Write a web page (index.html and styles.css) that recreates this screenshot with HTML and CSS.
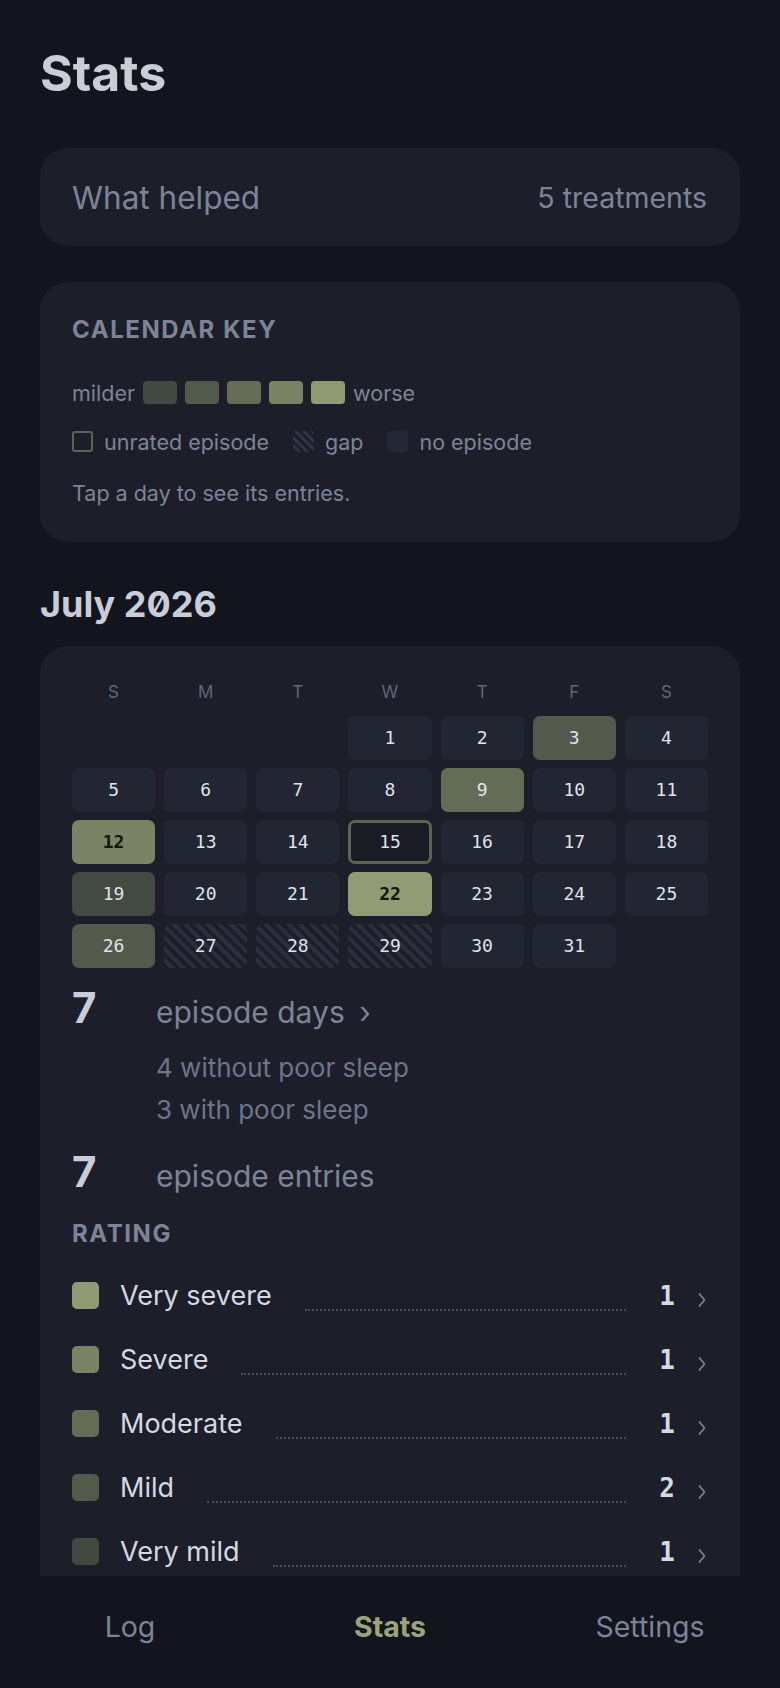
FILE: index.html
```html
<!DOCTYPE html>
<html lang="en">
<head>
    <meta charset="UTF-8">
    <meta name="viewport" content="width=device-width, initial-scale=1.0">
    <title>Stats</title>
    <link rel="stylesheet" href="styles.css">
</head>
<body>
    <div class="app">
        <main class="screen">
            <h1 class="page-title">Stats</h1>

            <a class="card link-card" href="#">
                <span class="link-name">What helped</span>
                <span class="link-value">5 treatments</span>
            </a>

            <section class="card key-card">
                <h2 class="label">Calendar key</h2>
                <div class="key-row">
                    <span>milder</span>
                    <span class="sw l1"></span>
                    <span class="sw l2"></span>
                    <span class="sw l3"></span>
                    <span class="sw l4"></span>
                    <span class="sw l5"></span>
                    <span>worse</span>
                </div>
                <div class="key-row key-types">
                    <span class="key-item"><span class="mark unrated"></span>unrated episode</span>
                    <span class="key-item"><span class="mark hatch"></span>gap</span>
                    <span class="key-item"><span class="mark empty"></span>no episode</span>
                </div>
                <p class="hint">Tap a day to see its entries.</p>
            </section>

            <h2 class="month">July 2026</h2>

            <section class="card cal-card">
                <div class="weekdays">
                    <span>S</span><span>M</span><span>T</span><span>W</span><span>T</span><span>F</span><span>S</span>
                </div>
                <div class="days">
                    <span class="blank"></span><span class="blank"></span><span class="blank"></span>
                    <span class="day">1</span>
                    <span class="day">2</span>
                    <span class="day l2">3</span>
                    <span class="day">4</span>
                    <span class="day">5</span>
                    <span class="day">6</span>
                    <span class="day">7</span>
                    <span class="day">8</span>
                    <span class="day l3">9</span>
                    <span class="day">10</span>
                    <span class="day">11</span>
                    <span class="day l4 strong">12</span>
                    <span class="day">13</span>
                    <span class="day">14</span>
                    <span class="day unrated-day">15</span>
                    <span class="day">16</span>
                    <span class="day">17</span>
                    <span class="day">18</span>
                    <span class="day l1">19</span>
                    <span class="day">20</span>
                    <span class="day">21</span>
                    <span class="day l5 strong">22</span>
                    <span class="day">23</span>
                    <span class="day">24</span>
                    <span class="day">25</span>
                    <span class="day l2">26</span>
                    <span class="day gap-day">27</span>
                    <span class="day gap-day">28</span>
                    <span class="day gap-day">29</span>
                    <span class="day">30</span>
                    <span class="day">31</span>
                </div>

                <div class="stat first">
                    <span class="stat-num">7</span>
                    <span class="stat-label">episode days <span class="more">&rsaquo;</span></span>
                    <div class="stat-sub">
                        <div>4 without poor sleep</div>
                        <div>3 with poor sleep</div>
                    </div>
                </div>
                <div class="stat second">
                    <span class="stat-num">7</span>
                    <span class="stat-label">episode entries</span>
                </div>

                <h2 class="label rating-title">Rating</h2>
                <ul class="ratings">
                    <li><span class="rsw l5"></span><span class="rname">Very severe</span><span class="leader"></span><span class="rcount">1</span><svg class="chev" viewBox="0 0 10 16"><path d="M2.5 2 L7.5 8 L2.5 14"/></svg></li>
                    <li><span class="rsw l4"></span><span class="rname">Severe</span><span class="leader"></span><span class="rcount">1</span><svg class="chev" viewBox="0 0 10 16"><path d="M2.5 2 L7.5 8 L2.5 14"/></svg></li>
                    <li><span class="rsw l3"></span><span class="rname">Moderate</span><span class="leader"></span><span class="rcount">1</span><svg class="chev" viewBox="0 0 10 16"><path d="M2.5 2 L7.5 8 L2.5 14"/></svg></li>
                    <li><span class="rsw l2"></span><span class="rname">Mild</span><span class="leader"></span><span class="rcount">2</span><svg class="chev" viewBox="0 0 10 16"><path d="M2.5 2 L7.5 8 L2.5 14"/></svg></li>
                    <li><span class="rsw l1"></span><span class="rname">Very mild</span><span class="leader"></span><span class="rcount">1</span><svg class="chev" viewBox="0 0 10 16"><path d="M2.5 2 L7.5 8 L2.5 14"/></svg></li>
                </ul>
            </section>
        </main>

        <nav class="tabbar">
            <a href="#">Log</a>
            <a href="#" class="active">Stats</a>
            <a href="#">Settings</a>
        </nav>
    </div>
</body>
</html>
```

FILE: styles.css
```css
*{margin:0;padding:0;box-sizing:border-box;}
body{background:#12151d;color:#c9cdd8;font-family:Inter,"Noto Sans",sans-serif;}
a{text-decoration:none;color:inherit;}
ul{list-style:none;}

.app{height:100vh;display:flex;flex-direction:column;}
.screen{flex:1;overflow:hidden;padding:43px 40px 0;}

.page-title{font-size:50px;line-height:1.2;font-weight:700;color:#c9cdd8;margin-bottom:45px;}

.card{background:#1c1f2a;border-radius:28px;}

/* what helped */
.link-card{height:98px;display:flex;align-items:center;justify-content:space-between;padding:0 33px 0 32px;color:#7c8497;}
.link-name{font-size:31.5px;}
.link-value{font-size:28.5px;}

/* calendar key */
.key-card{margin-top:36px;padding:34px 32px 37px;}
.label{font-size:24px;line-height:1.2;font-weight:700;text-transform:uppercase;letter-spacing:0.065em;color:#7c8497;}
.key-row{display:flex;align-items:center;gap:8px;height:24px;font-size:21.5px;color:#7c8497;margin-top:36px;}
.key-types{margin-top:25px;gap:0;}
.key-item{display:flex;align-items:center;margin-right:24px;}
.sw{width:34px;height:23px;border-radius:4px;}
.mark{width:21px;height:21px;border-radius:3px;margin-right:11px;}
.mark.unrated{border:2px solid #5c6450;}
.mark.hatch{background:repeating-linear-gradient(45deg,#1c1f2a 0 3px,#313644 3px 6px);}
.mark.empty{background:#232733;}
.hint{font-size:21.5px;line-height:24px;color:#7c8497;margin-top:27px;}

.l1{background:#424940;}
.l2{background:#525a4a;}
.l3{background:#646c55;}
.l4{background:#7a8464;}
.l5{background:#919b73;}

/* month */
.month{font-size:36px;line-height:1.2;font-weight:700;color:#c9cdd8;margin-top:41px;margin-bottom:20px;font-feature-settings:"zero" 1;}

.cal-card{padding:34px 32px 40px;border-bottom-left-radius:0;border-bottom-right-radius:0;}
.weekdays{display:grid;grid-template-columns:repeat(7,1fr);column-gap:9px;text-align:center;font-size:17px;line-height:24px;color:#5f677a;margin-bottom:12px;}
.days{display:grid;grid-template-columns:repeat(7,1fr);gap:8px 9px;}
.day{height:44px;border-radius:7px;background:#222632;display:flex;align-items:center;justify-content:center;font-family:"DejaVu Sans Mono","Liberation Mono",monospace;font-size:18px;color:#dfe3ec;}
.day.l1{background:#434a42;}
.day.l2{background:#535a4c;}
.day.l3{background:#636c55;}
.day.l4{background:#7a8464;}
.day.l5{background:#929c74;}
.day.strong{font-weight:700;color:#13160f;}
.day.unrated-day{background:#191c25;border:3px solid #5c6450;}
.day.gap-day{background:repeating-linear-gradient(45deg,#1c1f2a 0 4px,#2b2f3c 4px 8px);}

/* stats */
.stat{display:grid;grid-template-columns:84px 1fr;align-items:baseline;}
.stat.first{margin-top:15px;}
.stat.second{margin-top:16px;}
.stat-num{font-size:42px;line-height:50px;font-weight:700;color:#c9cdd8;}
.stat-label{font-size:30px;line-height:50px;color:#7c8497;}
.stat-label .more{margin-left:6px;}
.stat-sub{grid-column:2;margin-top:10px;font-size:26px;line-height:42px;color:#6d7588;}

/* rating */
.rating-title{margin-top:19px;margin-bottom:15px;}
.ratings li{height:64px;display:flex;align-items:center;}
.rsw{width:27px;height:27px;border-radius:5px;margin-right:21px;}
.rname{font-size:27px;color:#d5d9e2;}
.leader{flex:1;height:2px;margin:28px 33px 0;border-bottom:2px dotted #4a5062;}
.rcount{font-family:"DejaVu Sans Mono","Liberation Mono",monospace;font-weight:700;font-size:26px;color:#d5d9e2;}
.chev{width:10px;height:16px;margin:9px 1px 0 22px;fill:none;stroke:#7c8497;stroke-width:1.8;stroke-linecap:round;stroke-linejoin:round;}

/* tab bar */
.tabbar{height:112px;flex-shrink:0;display:grid;grid-template-columns:repeat(3,1fr);align-items:center;padding-bottom:12px;background:#12151d;}
.tabbar a{text-align:center;font-size:28.5px;color:#7c8497;}
.tabbar a.active{color:#9ca47b;font-weight:700;}
```
